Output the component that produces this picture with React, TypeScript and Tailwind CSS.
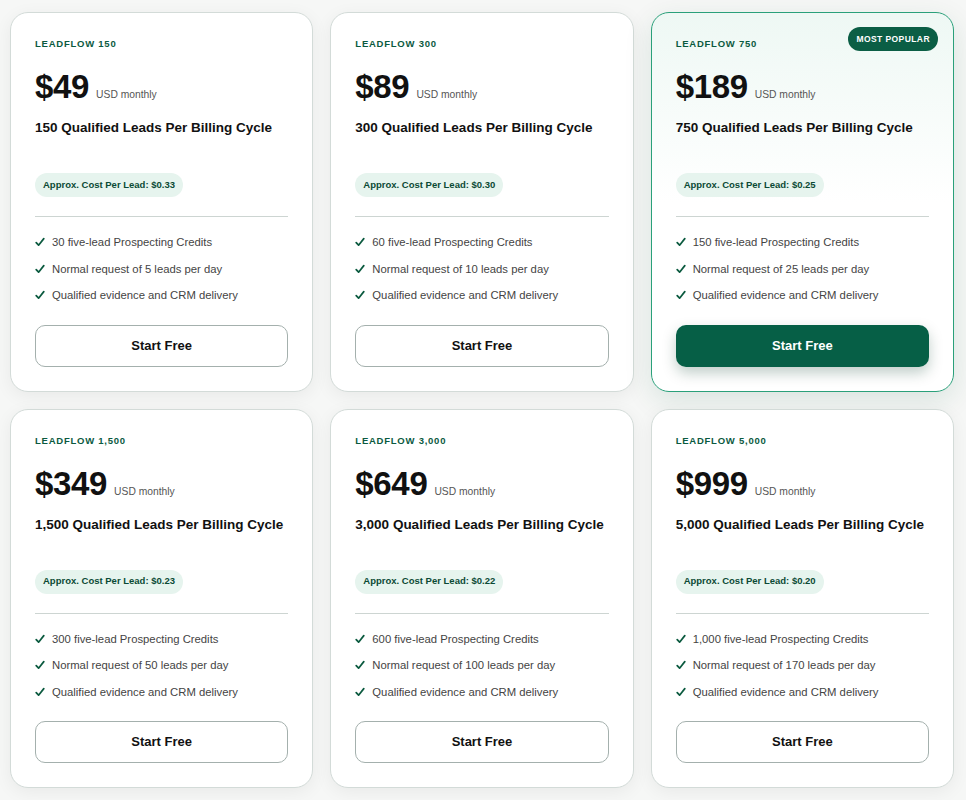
import React from "react";

type Plan = {
  name: string;
  price: string;
  leads: string;
  cost: string;
  credits: string;
  perDay: string;
  popular?: boolean;
};

const plans: Plan[] = [
  { name: "LEADFLOW 150", price: "$49", leads: "150", cost: "$0.33", credits: "30", perDay: "5" },
  { name: "LEADFLOW 300", price: "$89", leads: "300", cost: "$0.30", credits: "60", perDay: "10" },
  { name: "LEADFLOW 750", price: "$189", leads: "750", cost: "$0.25", credits: "150", perDay: "25", popular: true },
  { name: "LEADFLOW 1,500", price: "$349", leads: "1,500", cost: "$0.23", credits: "300", perDay: "50" },
  { name: "LEADFLOW 3,000", price: "$649", leads: "3,000", cost: "$0.22", credits: "600", perDay: "100" },
  { name: "LEADFLOW 5,000", price: "$999", leads: "5,000", cost: "$0.20", credits: "1,000", perDay: "170" },
];

function Check() {
  return (
    <svg width="10" height="10" viewBox="0 0 10 10" className="shrink-0">
      <path d="M1.2 5.6 L3.6 8.2 L8.8 1.6" fill="none" stroke="#0b5a3f" strokeWidth="1.7" strokeLinecap="round" strokeLinejoin="round" />
    </svg>
  );
}

function Card({ p }: { p: Plan }) {
  return (
    <div
      className={
        "relative flex flex-col rounded-[18px] border px-6 pt-[25px] pb-6 " +
        (p.popular
          ? "border-[#2aa07a] bg-gradient-to-b from-[#eef8f4] via-white to-white shadow-[0_8px_28px_rgba(10,90,60,0.12)]"
          : "border-[#d3dbd8] bg-white shadow-[0_4px_18px_rgba(0,0,0,0.06)]")
      }
    >
      {p.popular && (
        <div className="absolute right-[15px] top-[14px] flex h-[24px] items-center rounded-full bg-[#0b5e45] px-[8px] text-[8.5px] font-bold tracking-[0.05em] text-white">
          MOST POPULAR
        </div>
      )}
      <div className="text-[9.5px] font-bold leading-[12px] tracking-[0.08em] text-[#0b5a3f]">{p.name}</div>
      <div className="mt-[21px] flex items-end">
        <span className="text-[33px] font-bold leading-[32px] tracking-[-0.01em] text-[#111]">{p.price}</span>
        <span className="mb-[2px] ml-[7px] text-[10.3px] leading-[12px] text-[#555]">USD monthly</span>
      </div>
      <div className="mt-[16px] text-[13.5px] font-bold leading-[18px] text-[#111]">
        {p.leads} Qualified Leads Per Billing Cycle
      </div>
      <div className="mt-[36px] flex">
        <div className="flex h-[24px] items-center rounded-full bg-[#e6f4ee] px-[8px] text-[9.5px] font-bold text-[#0b4a35]">
          Approx. Cost Per Lead: {p.cost}
        </div>
      </div>
      <div className="mt-[19px] h-px bg-[#cdd5d2]" />
      <ul className="mt-[17px] flex flex-col gap-[10px] text-[11.3px] leading-[16.5px] text-[#444]">
        <li className="flex items-center gap-[7px]">
          <Check />
          {p.credits} five-lead Prospecting Credits
        </li>
        <li className="flex items-center gap-[7px]">
          <Check />
          Normal request of {p.perDay} leads per day
        </li>
        <li className="flex items-center gap-[7px]">
          <Check />
          Qualified evidence and CRM delivery
        </li>
      </ul>
      <button
        className={
          "mt-[21px] flex h-[42px] items-center justify-center rounded-[10px] text-[13px] font-bold " +
          (p.popular
            ? "bg-[#065f46] text-white shadow-[0_6px_14px_rgba(0,60,40,0.25)]"
            : "border border-[#a4b0ad] bg-white text-[#111]")
        }
      >
        Start Free
      </button>
    </div>
  );
}

export default function App() {
  return (
    <div
      className="min-h-[800px] w-[966px] bg-[#f6f7f6] px-[10px] pt-[12px]"
      style={{ fontFamily: '"Liberation Sans", Arial, sans-serif' }}
    >
      <div className="grid w-[944px] grid-cols-3 gap-[17px]">
        {plans.map((p) => (
          <Card key={p.name} p={p} />
        ))}
      </div>
    </div>
  );
}
